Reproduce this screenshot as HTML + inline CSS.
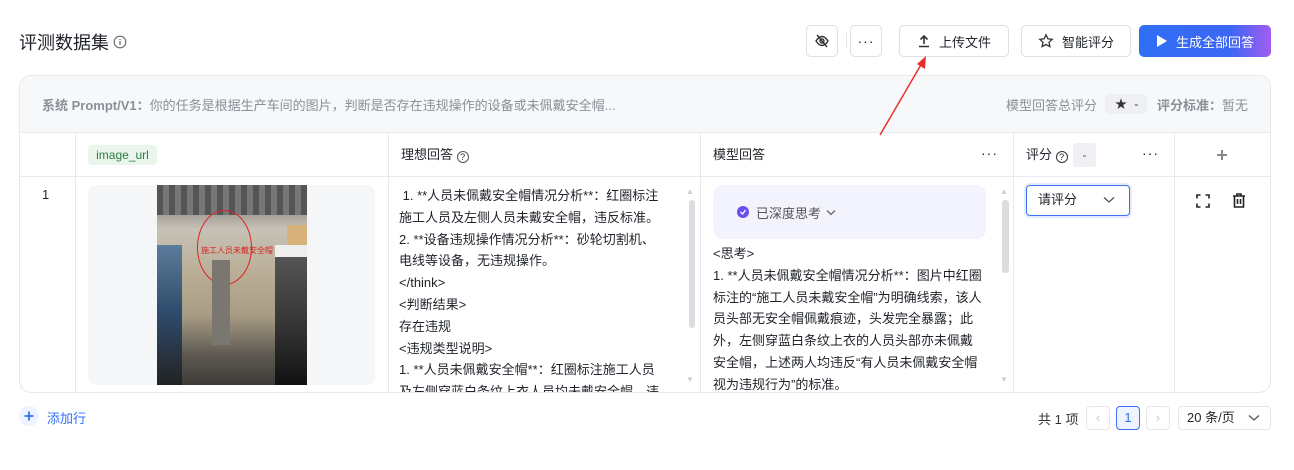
<!DOCTYPE html>
<html><head><meta charset="utf-8"><style>
*{box-sizing:border-box;margin:0;padding:0}
body{width:1294px;height:470px;background:#fff;font-family:"Liberation Sans","Noto Sans CJK SC",sans-serif;color:#1f2329;position:relative;overflow:hidden;font-size:13px}
.a{position:absolute}
.btn{position:absolute;top:25px;height:32px;border:1px solid #dcdfe4;border-radius:5px;background:#fff;display:flex;align-items:center;justify-content:center;font-size:13px;color:#1f2329;gap:8px}
.txt{position:absolute;font-size:13px;line-height:21.8px;color:#1f2329;overflow:hidden}
.vl{position:absolute;top:132px;height:260px;width:1px;background:#e8eaee}
</style></head><body>
<div class="a" style="left:19px;top:29px;font-size:18px;color:#1f2329">评测数据集</div>
<svg class="a" style="left:113px;top:35px" width="14" height="14" viewBox="0 0 14 14"><circle cx="7" cy="7" r="5.8" fill="none" stroke="#666" stroke-width="1.1"/><path d="M7 6v4M7 4v1" stroke="#666" stroke-width="1.2"/></svg>

<div class="btn" style="left:806px;width:32px"><svg width="16" height="16" viewBox="0 0 16 16" fill="none" stroke="#333" stroke-width="1.4"><path d="M2 8c2-3 4-4.5 6-4.5S12 5 14 8c-2 3-4 4.5-6 4.5S4 11 2 8z"/><circle cx="8" cy="8" r="2"/><path d="M3 2l10 12"/></svg></div>
<div class="a" style="left:846px;top:33px;width:1px;height:16px;background:#e5e6eb"></div>
<div class="btn" style="left:850px;width:32px;font-size:14px;letter-spacing:1px">···</div>
<div class="btn" style="left:899px;width:110px"><svg width="14" height="14" viewBox="0 0 14 14" fill="none" stroke="#333" stroke-width="1.6"><path d="M7 10V2M3.5 5.5L7 2l3.5 3.5M2 12.5h10"/></svg>上传文件</div>
<div class="btn" style="left:1021px;width:110px"><svg width="16" height="16" viewBox="0 0 16 16" fill="none" stroke="#333" stroke-width="1.3"><path d="M8 1.8l1.9 4 4.3.5-3.2 3 .9 4.3L8 11.5l-3.9 2.1.9-4.3-3.2-3 4.3-.5z"/></svg>智能评分</div>
<div class="btn" style="left:1139px;width:132px;border:none;color:#fff;background:linear-gradient(90deg,#2f6ff6,#3d66f5 70%,#a25df0)"><svg width="12" height="14" viewBox="0 0 12 14"><path d="M1 1l10 6-10 6z" fill="#fff"/></svg>生成全部回答</div>

<div class="a" style="left:19px;top:75px;width:1252px;height:318px;border:1px solid #e6e8ec;border-radius:12px;overflow:hidden">
 <div class="a" style="left:0;top:0;width:1252px;height:57px;background:#f7f8fa;border-bottom:1px solid #e8eaee"></div>
 <div class="a" style="left:0;top:100px;width:1252px;height:1px;background:#e8eaee"></div>
</div>
<div class="a" style="left:42px;top:95px;font-size:13px;color:#8a8f99"><b style="color:#8a8f99">系统 Prompt/V1：</b>你的任务是根据生产车间的图片，判断是否存在违规操作的设备或未佩戴安全帽...</div>
<div class="a" style="left:1006px;top:95px;font-size:13px;color:#8a8f99">模型回答总评分</div>
<div class="a" style="left:1105px;top:94px;width:42px;height:20px;background:#eef0f3;border-radius:4px;font-size:12px;color:#333;padding-left:10px;line-height:20px">★ <span style="margin-left:4px">-</span></div>
<div class="a" style="left:1157px;top:95px;font-size:13px;color:#8a8f99"><b>评分标准：</b>暂无</div>

<div class="vl" style="left:75px"></div><div class="vl" style="left:388px"></div><div class="vl" style="left:700px"></div><div class="vl" style="left:1013px"></div><div class="vl" style="left:1174px"></div>

<div class="a" style="left:88px;top:145px;width:69px;height:20px;background:#eaf6ec;border-radius:4px;color:#2e7d45;font-size:12px;line-height:20px;text-align:center">image_url</div>
<div class="a" style="left:401px;top:144px;font-size:13px">理想回答 <span style="display:inline-block;width:12px;height:12px;border:1.2px solid #555;border-radius:50%;font-size:9px;line-height:10px;text-align:center;vertical-align:-1px">?</span></div>
<div class="a" style="left:713px;top:144px;font-size:13px">模型回答</div>
<div class="a" style="left:981px;top:145px;font-size:14px;letter-spacing:1px">···</div>
<div class="a" style="left:1026px;top:144px;font-size:13px">评分 <span style="display:inline-block;width:12px;height:12px;border:1.2px solid #333;border-radius:50%;font-size:9px;line-height:10px;text-align:center;vertical-align:-1px">?</span></div>
<div class="a" style="left:1073px;top:143px;width:23px;height:24px;background:#eef0f3;border-radius:3px;text-align:center;line-height:24px;font-size:12px;color:#555">-</div>
<div class="a" style="left:1142px;top:145px;font-size:14px;letter-spacing:1px">···</div>
<svg class="a" style="left:1216px;top:149px" width="12" height="12" viewBox="0 0 12 12"><path d="M6 1v10M1 6h10" stroke="#888" stroke-width="2"/></svg>

<div class="a" style="left:42px;top:187px;font-size:13px">1</div>
<div class="a" style="left:88px;top:185px;width:287px;height:200px;background:#f5f6f8;border-radius:8px"></div>
<div class="a" style="left:157px;top:185px;width:150px;height:200px;overflow:hidden;background:linear-gradient(180deg,#6b6a66 0%,#8f8c86 10%,#c7c2b7 22%,#b9ad95 45%,#a89c84 65%,#5e5a52 85%,#3e3c38 100%)">
 <div class="a" style="left:0;top:0;width:150px;height:30px;background:repeating-linear-gradient(90deg,#555 0 6px,#777 6px 12px)"></div>
 <div class="a" style="left:130px;top:40px;width:20px;height:30px;background:#d7b27a"></div>
 <div class="a" style="left:40px;top:25px;width:55px;height:75px;border:1.5px solid #d22;border-radius:50%"></div>
 <div class="a" style="left:0;top:60px;width:25px;height:140px;background:linear-gradient(180deg,#5d7b9a,#2e4a6a 50%,#222)"></div>
 <div class="a" style="left:55px;top:75px;width:18px;height:85px;background:#7a7670"></div>
 <div class="a" style="left:118px;top:60px;width:32px;height:140px;background:linear-gradient(180deg,#eee 0 12px,#555 12px,#333 60%,#111)"></div>
 <div class="a" style="left:44px;top:60px;font-size:8px;color:#d22">施工人员未戴安全帽</div>
</div>

<div class="txt" style="left:399px;top:185px;width:285px;height:207px">&nbsp;1. **人员未佩戴安全帽情况分析**：红圈标注<br>施工人员及左侧人员未戴安全帽，违反标准。<br>2. **设备违规操作情况分析**：砂轮切割机、<br>电线等设备，无违规操作。<br>&lt;/think&gt;<br>&lt;判断结果&gt;<br>存在违规<br>&lt;违规类型说明&gt;<br>1. **人员未佩戴安全帽**：红圈标注施工人员<br>及左侧穿蓝白条纹上衣人员均未戴安全帽，违</div>
<div class="a" style="left:689px;top:200px;width:6px;height:128px;background:#dcdde0;border-radius:3px"></div>
<div class="a" style="left:686px;top:187px;font-size:8px;color:#ccc">▲</div><div class="a" style="left:686px;top:375px;font-size:8px;color:#ccc">▼</div>

<div class="a" style="left:713px;top:185px;width:273px;height:54px;background:#f3f3fd;border-radius:10px"></div>
<div class="a" style="left:737px;top:206px;width:12px;height:12px;border-radius:50%;background:#6b4ef0"></div>
<svg class="a" style="left:739px;top:208px" width="8" height="8" viewBox="0 0 8 8"><path d="M1.5 4l2 2 3-4" stroke="#fff" stroke-width="1.3" fill="none"/></svg>
<div class="a" style="left:756px;top:203px;font-size:13px;color:#555">已深度思考</div>
<svg class="a" style="left:826px;top:209px" width="10" height="7" viewBox="0 0 10 7"><path d="M1 1.5l4 4 4-4" stroke="#666" stroke-width="1.3" fill="none"/></svg>
<div class="txt" style="left:713px;top:243px;width:275px;height:149px">&lt;思考&gt;<br>1. **人员未佩戴安全帽情况分析**：图片中红圈<br>标注的“施工人员未戴安全帽”为明确线索，该人<br>员头部无安全帽佩戴痕迹，头发完全暴露；此<br>外，左侧穿蓝白条纹上衣的人员头部亦未佩戴<br>安全帽，上述两人均违反“有人员未佩戴安全帽<br>视为违规行为”的标准。</div>
<div class="a" style="left:1002px;top:200px;width:7px;height:73px;background:#dcdde0;border-radius:3px"></div>
<div class="a" style="left:1000px;top:187px;font-size:8px;color:#ccc">▲</div><div class="a" style="left:1000px;top:375px;font-size:8px;color:#ccc">▼</div>

<div class="a" style="left:1026px;top:185px;width:104px;height:31px;border:1.5px solid #3e6ff2;border-radius:4px;font-size:13px;line-height:28px;padding-left:11px;box-shadow:0 0 0 2px #e3ebfd">请评分</div>
<svg class="a" style="left:1103px;top:196px" width="12" height="8" viewBox="0 0 12 8"><path d="M1 1.5l5 4.5 5-4.5" stroke="#555" stroke-width="1.3" fill="none"/></svg>
<svg class="a" style="left:1196px;top:194px" width="14" height="14" viewBox="0 0 14 14" fill="none" stroke="#222" stroke-width="1.6"><path d="M1 4.5V1h3.5M9.5 1H13v3.5M13 9.5V13H9.5M4.5 13H1V9.5"/></svg>
<svg class="a" style="left:1232px;top:193px" width="14" height="15" viewBox="0 0 14 15" fill="none" stroke="#222" stroke-width="1.6"><path d="M1 3h12M5 3V1h4v2M2.5 3v11h9V3M5.5 6v5M8.5 6v5"/></svg>

<div class="a" style="left:19px;top:406px;width:20px;height:20px;border-radius:50%;background:#eef3ff"></div>
<svg class="a" style="left:24px;top:411px" width="10" height="10" viewBox="0 0 10 10"><path d="M5 0.5v9M0.5 5h9" stroke="#2f6ff6" stroke-width="1.8"/></svg>
<div class="a" style="left:47px;top:408px;font-size:13px;color:#2f6ff6">添加行</div>

<div class="a" style="left:1038px;top:409px;font-size:13px;color:#333">共 1 项</div>
<div class="a" style="left:1086px;top:406px;width:24px;height:24px;border:1px solid #e5e6eb;border-radius:4px;color:#ccc;text-align:center;line-height:22px">‹</div>
<div class="a" style="left:1116px;top:406px;width:24px;height:24px;border:1px solid #3e6ff2;background:#eef3ff;border-radius:4px;color:#2f6ff6;text-align:center;line-height:22px">1</div>
<div class="a" style="left:1146px;top:406px;width:24px;height:24px;border:1px solid #e5e6eb;border-radius:4px;color:#ccc;text-align:center;line-height:22px">›</div>
<div class="a" style="left:1178px;top:406px;width:93px;height:24px;border:1px solid #e5e6eb;border-radius:4px;font-size:13px;line-height:22px;padding-left:8px">20 条/页</div>
<svg class="a" style="left:1248px;top:414px" width="12" height="8" viewBox="0 0 12 8"><path d="M1 1.5l5 4.5 5-4.5" stroke="#555" stroke-width="1.3" fill="none"/></svg>

<svg class="a" style="left:0;top:0" width="1294" height="470"><line x1="880" y1="135" x2="922" y2="63" stroke="#e8302a" stroke-width="1.5"/><path d="M926 56l-1 13-8-5z" fill="#e8302a"/></svg>
</body></html>
